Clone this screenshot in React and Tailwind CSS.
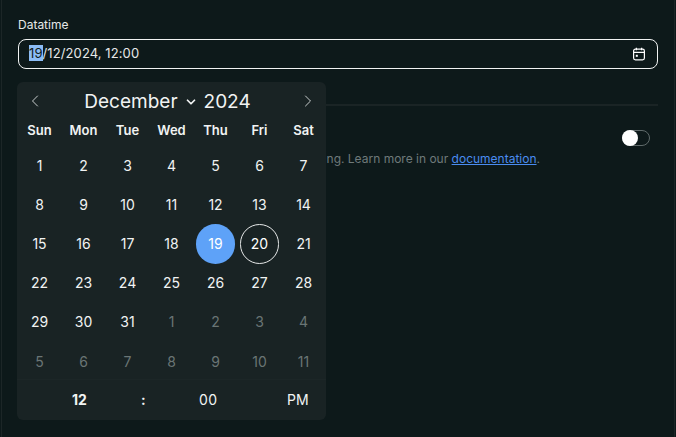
import { ChevronLeft, ChevronRight, ChevronDown } from "lucide-react"

const weekdays = ["Sun", "Mon", "Tue", "Wed", "Thu", "Fri", "Sat"]

const days = [
  1, 2, 3, 4, 5, 6, 7,
  8, 9, 10, 11, 12, 13, 14,
  15, 16, 17, 18, 19, 20, 21,
  22, 23, 24, 25, 26, 27, 28,
  29, 30, 31, 1, 2, 3, 4,
  5, 6, 7, 8, 9, 10, 11,
]

function CalendarIcon() {
  return (
    <svg width="14" height="14" viewBox="0 0 14 14" fill="none" stroke="currentColor" strokeWidth="1.2">
      <rect x="1.6" y="2.2" width="10.8" height="10.6" rx="1.8" />
      <path d="M1.6 5.4h10.8M4.4 0.8v2.4M9.6 0.8v2.4" />
      <rect x="3.8" y="7.8" width="2" height="2" fill="currentColor" stroke="none" />
    </svg>
  )
}

function Calendar() {
  return (
    <div className="absolute left-[17px] top-[82px] w-[309px] h-[338px] rounded-md bg-[#192324] text-white">
      <div className="flex items-center justify-between h-[38px] pt-[2px] pl-[8px] pr-[8px]">
        <ChevronLeft size={20} strokeWidth={1.1} className="-mt-[3px] text-[#d8dcdc]" />
        <div className="flex items-center mr-[8px] text-[19px] text-[#f1f3f3]">
          <span>December</span>
          <ChevronDown size={14} strokeWidth={3} className="ml-[6px] mr-[6px]" />
          <span>2024</span>
        </div>
        <ChevronRight size={20} strokeWidth={1.1} className="-mt-[3px] text-[#d8dcdc]" />
      </div>
      <div className="grid grid-cols-[repeat(7,44px)] px-[0.5px] pt-[1px]">
        {weekdays.map((d) => (
          <div key={d} className="h-[20px] flex items-center justify-center text-[13px] font-semibold text-[#f1f3f3]">
            {d}
          </div>
        ))}
      </div>
      <div className="grid grid-cols-[repeat(7,44px)] auto-rows-[39.2px] px-[0.5px] pt-[5px]">
        {days.map((d, i) => {
          const muted = i > 30
          const selected = i === 18
          const today = i === 19
          return (
            <div key={i} className="flex items-center justify-center">
              <span
                className={
                  "w-[39px] h-[40px] rounded-full flex items-center justify-center text-sm " +
                  (selected
                    ? "bg-[#5ea2f8] text-white"
                    : today
                      ? "border border-[#e6e8e8] text-white"
                      : muted
                        ? "text-[#6a7575]"
                        : "text-[#f1f3f3]")
                }
              >
                {d}
              </span>
            </div>
          )
        })}
      </div>
      <div className="flex items-center h-[40px] -mt-[2px] border-t border-[#1c2627] text-sm text-[#f1f3f3]">
        <span className="ml-[55px] w-[69px] font-bold">12</span>
        <span className="w-[58px] font-bold">:</span>
        <span className="w-[88px] tracking-[0.5px]">00</span>
        <span>PM</span>
      </div>
    </div>
  )
}

export default function App() {
  return (
    <div className="relative w-[676px] h-[437px] overflow-hidden bg-[#0d191a] font-['Inter',sans-serif] text-white">
      <div className="absolute left-[1px] top-0 bottom-0 w-[1px] bg-[#1c2627]" />
      <div className="absolute right-[1px] top-0 bottom-0 w-[1px] bg-[#1c2627]" />
      <div className="pl-[18px] pr-[18px] pt-[16px]">
        <label className="block h-[23px] text-xs leading-[17px] text-[#e6e8e8]">Datatime</label>
        <div className="flex items-center justify-between h-[30px] rounded-lg border border-[#f1f3f3] pl-[10px] pr-[11px]">
          <span className="text-[13px] tracking-[0.1px] text-[#e6e8e8]">
            <span className="bg-[#8cbcf5] text-[#0e1a1b]">19</span>/12/2024, 12:00
          </span>
          <CalendarIcon />
        </div>
        <div className="mt-[35px] border-t-2 border-[#1a2425]" />
        <div className="flex justify-end mt-[24px] pr-[8px]">
          <span className="relative w-[28px] h-[16px] rounded-full border border-[#5f6a6a]">
            <span className="absolute left-[-1px] top-[-1px] w-[16px] h-[16px] rounded-full bg-white" />
          </span>
        </div>
        <p className="mt-[5px] text-right pr-[118px] text-xs text-[#6f7a7a]">
          ng. Learn more in our <a className="underline text-[#4a8cf0]">documentation</a>.
        </p>
      </div>
      <Calendar />
    </div>
  )
}
